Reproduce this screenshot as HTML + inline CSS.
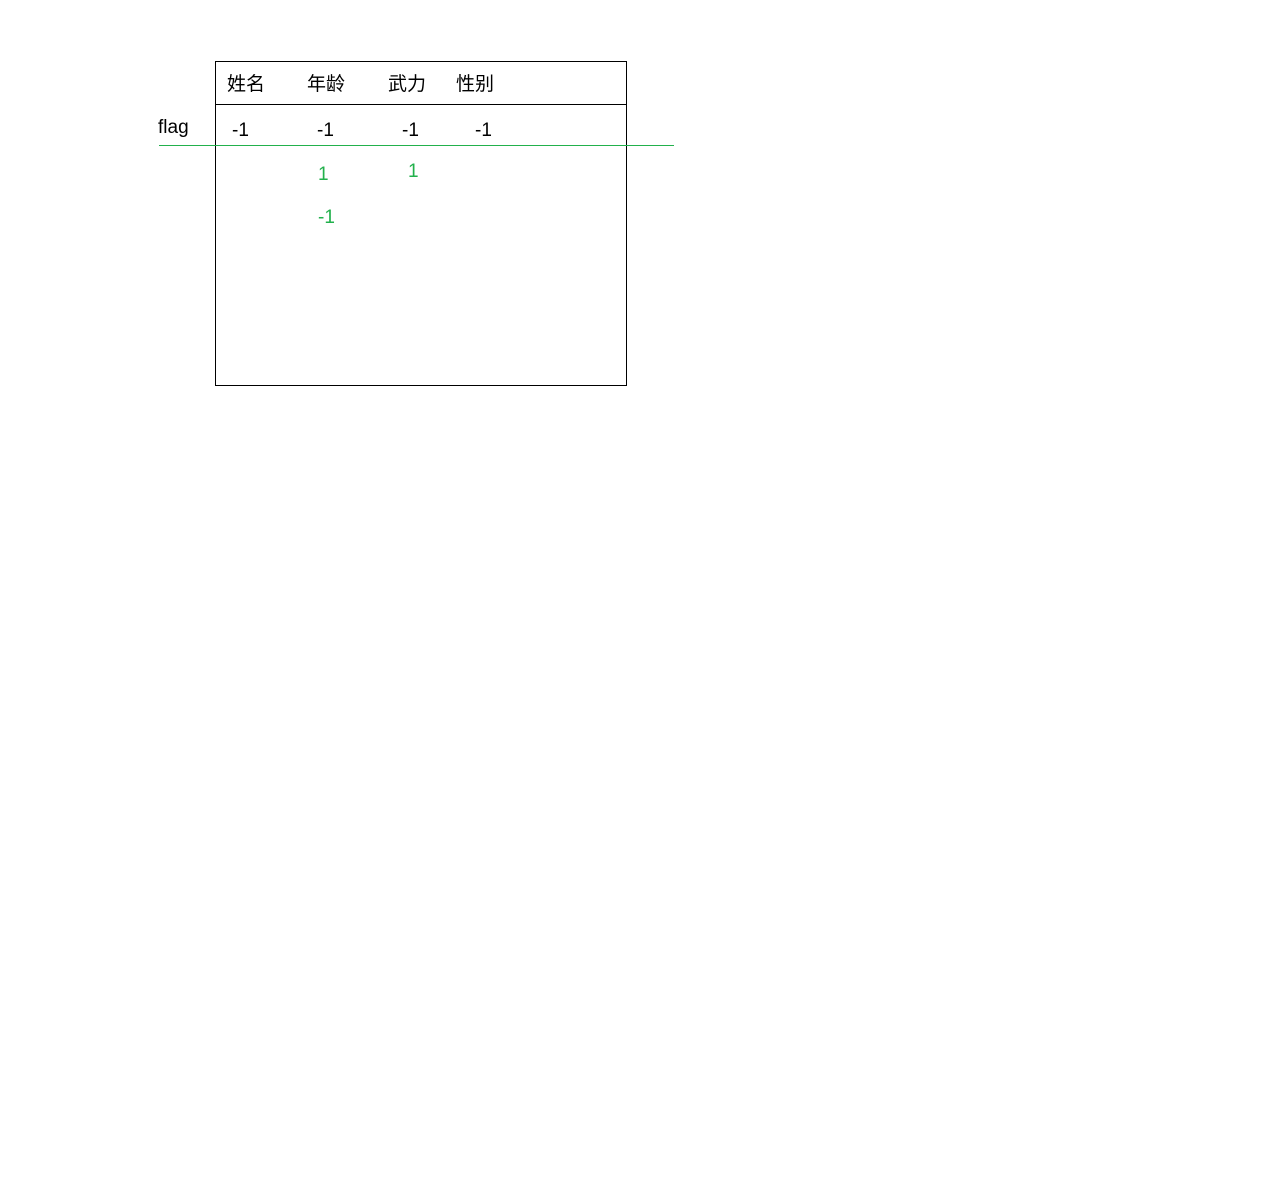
<!DOCTYPE html>
<html><head><meta charset="utf-8"><style>
body{margin:0;width:1274px;height:1188px;background:#fff;position:relative;font-family:"Liberation Sans","Noto Sans CJK SC",sans-serif;}
.t{position:absolute;font-size:19px;line-height:20px;color:#000;white-space:nowrap}
.g{color:#22b14c}
</style></head><body>
<div style="position:absolute;left:215px;top:61px;width:410px;height:323px;border:1px solid #000"></div>
<div style="position:absolute;left:215px;top:104px;width:412px;height:1px;background:#000"></div>
<div style="position:absolute;left:159px;top:145px;width:515px;height:1px;background:#22b14c;z-index:2"></div>
<div class="t" style="left:227px;top:75px">姓名</div>
<div class="t" style="left:307px;top:75px">年龄</div>
<div class="t" style="left:388px;top:75px">武力</div>
<div class="t" style="left:456px;top:75px">性别</div>
<div class="t" style="left:158px;top:118px">flag</div>
<div class="t" style="left:232px;top:121px">-1</div>
<div class="t" style="left:317px;top:121px">-1</div>
<div class="t" style="left:402px;top:121px">-1</div>
<div class="t" style="left:475px;top:121px">-1</div>
<div class="t g" style="left:318px;top:165px">1</div>
<div class="t g" style="left:408px;top:162px">1</div>
<div class="t g" style="left:318px;top:208px">-1</div>
</body></html>
